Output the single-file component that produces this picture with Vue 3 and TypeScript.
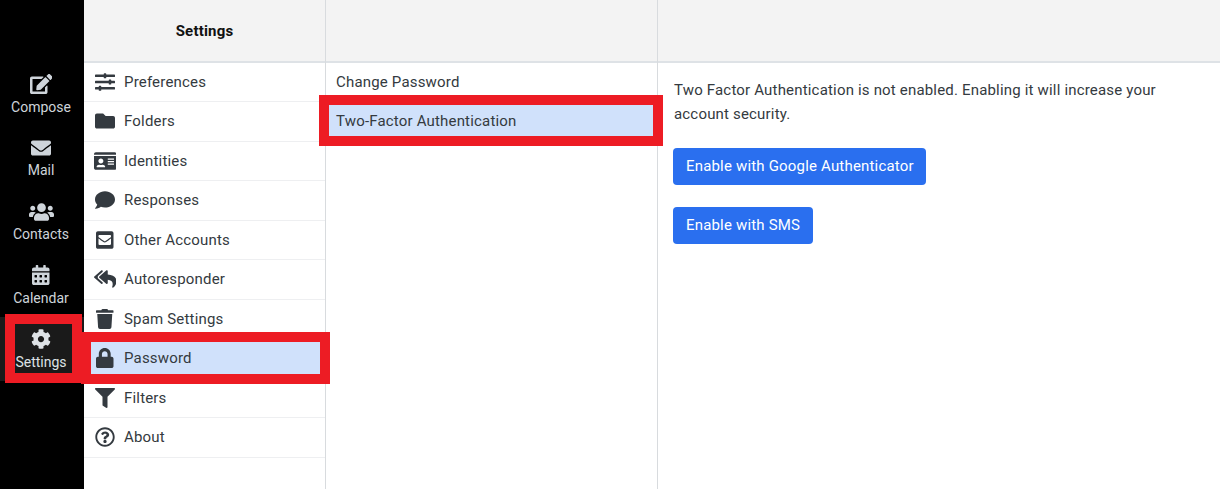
<script setup lang="ts">
interface Icon { vb: string; d: string }
const icons: Record<string, Icon> = {
  edit: { vb: '0 0 576 512', d: 'M402.6 83.2l90.2 90.2c3.8 3.8 3.8 10 0 13.8L274.4 405.6l-92.8 10.3c-12.4 1.4-22.9-9.1-21.5-21.5l10.3-92.8L388.8 83.2c3.8-3.8 10-3.8 13.8 0zm162-22.9l-48.8-48.8c-15.2-15.2-39.9-15.2-55.2 0l-35.4 35.4c-3.8 3.8-3.8 10 0 13.8l90.2 90.2c3.8 3.8 10 3.8 13.8 0l35.4-35.4c15.2-15.3 15.2-40 0-55.2zM384 346.2V448H64V128h229.8c3.2 0 6.2-1.3 8.5-3.5l40-40c7.6-7.6 2.2-20.5-8.5-20.5H48C21.5 64 0 85.5 0 112v352c0 26.5 21.5 48 48 48h352c26.5 0 48-21.5 48-48V306.2c0-10.7-12.9-16-20.5-8.5l-40 40c-2.2 2.3-3.5 5.3-3.5 8.5z' },
  envelope: { vb: '0 0 512 512', d: 'M502.3 190.8c3.9-3.1 9.7-.2 9.7 4.7V400c0 26.5-21.5 48-48 48H48c-26.5 0-48-21.5-48-48V195.6c0-5 5.7-7.8 9.7-4.7 22.4 17.4 52.1 39.5 154.1 113.6 21.1 15.4 56.7 47.8 92.2 47.6 35.7.3 72-32.8 92.3-47.6 102-74.1 131.6-96.3 154-113.7zM256 320c23.2.4 56.6-29.2 73.4-41.4 132.7-96.3 142.8-104.7 173.4-128.7 5.8-4.5 9.2-11.5 9.2-18.9v-19c0-26.5-21.5-48-48-48H48C21.5 64 0 85.5 0 112v19c0 7.4 3.4 14.3 9.2 18.9 30.6 23.9 40.7 32.4 173.4 128.7 16.8 12.2 50.2 41.8 73.4 41.4z' },
  users: { vb: '0 0 640 512', d: 'M96 224c35.3 0 64-28.7 64-64s-28.7-64-64-64-64 28.7-64 64 28.7 64 64 64zm448 0c35.3 0 64-28.7 64-64s-28.7-64-64-64-64 28.7-64 64 28.7 64 64 64zm32 32h-64c-17.6 0-33.5 7.1-45.1 18.6 40.3 22.1 68.9 62 75.1 109.4h66c17.7 0 32-14.3 32-32v-32c0-35.3-28.7-64-64-64zm-256 0c61.9 0 112-50.1 112-112S381.9 32 320 32 208 82.1 208 144s50.1 112 112 112zm76.8 32h-8.3c-20.8 10-43.9 16-68.5 16s-47.6-6-68.5-16h-8.3C179.6 288 128 339.6 128 403.2V432c0 26.5 21.5 48 48 48h288c26.5 0 48-21.5 48-48v-28.8c0-63.6-51.6-115.2-115.2-115.2zm-223.7-13.4C161.5 263.1 145.6 256 128 256H64c-35.3 0-64 28.7-64 64v32c0 17.7 14.3 32 32 32h65.9c6.3-47.4 34.9-87.3 75.2-109.4z' },
  calendar: { vb: '0 0 448 512', d: 'M0 464c0 26.5 21.5 48 48 48h352c26.5 0 48-21.5 48-48V192H0v272zm320-196c0-6.6 5.4-12 12-12h40c6.6 0 12 5.4 12 12v40c0 6.6-5.4 12-12 12h-40c-6.6 0-12-5.4-12-12v-40zm0 128c0-6.6 5.4-12 12-12h40c6.6 0 12 5.4 12 12v40c0 6.6-5.4 12-12 12h-40c-6.6 0-12-5.4-12-12v-40zM192 268c0-6.6 5.4-12 12-12h40c6.6 0 12 5.4 12 12v40c0 6.6-5.4 12-12 12h-40c-6.6 0-12-5.4-12-12v-40zm0 128c0-6.6 5.4-12 12-12h40c6.6 0 12 5.4 12 12v40c0 6.6-5.4 12-12 12h-40c-6.6 0-12-5.4-12-12v-40zM64 268c0-6.6 5.4-12 12-12h40c6.6 0 12 5.4 12 12v40c0 6.6-5.4 12-12 12H76c-6.6 0-12-5.4-12-12v-40zm0 128c0-6.6 5.4-12 12-12h40c6.6 0 12 5.4 12 12v40c0 6.6-5.4 12-12 12H76c-6.6 0-12-5.4-12-12v-40zM400 64h-48V16c0-8.8-7.2-16-16-16h-32c-8.8 0-16 7.2-16 16v48H160V16c0-8.8-7.2-16-16-16h-32c-8.8 0-16 7.2-16 16v48H48C21.5 64 0 85.5 0 112v48h448v-48c0-26.5-21.5-48-48-48z' },
  cog: { vb: '0 0 512 512', d: 'M487.4 315.7l-42.6-24.6c4.3-23.2 4.3-47 0-70.2l42.6-24.6c4.9-2.8 7.1-8.6 5.5-14-11.1-35.6-30-67.8-54.7-94.6-3.8-4.1-10-5.1-14.8-2.3L380.8 110c-17.9-15.4-38.5-27.3-60.8-35.1V25.8c0-5.6-3.9-10.5-9.4-11.7-36.7-8.2-74.3-7.8-109.2 0-5.5 1.2-9.4 6.1-9.4 11.7V75c-22.2 7.9-42.8 19.8-60.8 35.1L88.7 85.5c-4.9-2.8-11-1.9-14.8 2.3-24.7 26.7-43.6 58.9-54.7 94.6-1.7 5.4.6 11.2 5.5 14L67.3 221c-4.3 23.2-4.3 47 0 70.2l-42.6 24.6c-4.9 2.8-7.1 8.6-5.5 14 11.1 35.6 30 67.8 54.7 94.6 3.8 4.1 10 5.1 14.8 2.3l42.6-24.6c17.9 15.4 38.5 27.3 60.8 35.1v49.2c0 5.6 3.9 10.5 9.4 11.7 36.7 8.2 74.3 7.8 109.2 0 5.5-1.2 9.4-6.1 9.4-11.7v-49.2c22.2-7.9 42.8-19.8 60.8-35.1l42.6 24.6c4.9 2.8 11 1.9 14.8-2.3 24.7-26.7 43.6-58.9 54.7-94.6 1.5-5.5-.7-11.3-5.6-14.1zM256 336c-44.1 0-80-35.9-80-80s35.9-80 80-80 80 35.9 80 80-35.9 80-80 80z' },
  sliders: { vb: '0 0 512 512', d: 'M496 384H160v-16c0-8.8-7.2-16-16-16h-32c-8.8 0-16 7.2-16 16v16H16c-8.8 0-16 7.2-16 16v32c0 8.8 7.2 16 16 16h80v16c0 8.8 7.2 16 16 16h32c8.8 0 16-7.2 16-16v-16h336c8.8 0 16-7.2 16-16v-32c0-8.8-7.2-16-16-16zm0-160h-80v-16c0-8.8-7.2-16-16-16h-32c-8.8 0-16 7.2-16 16v16H16c-8.8 0-16 7.2-16 16v32c0 8.8 7.2 16 16 16h336v16c0 8.8 7.2 16 16 16h32c8.8 0 16-7.2 16-16v-16h80c8.8 0 16-7.2 16-16v-32c0-8.8-7.2-16-16-16zm0-160H288V48c0-8.8-7.2-16-16-16h-32c-8.8 0-16 7.2-16 16v16H16C7.2 64 0 71.2 0 80v32c0 8.8 7.2 16 16 16h208v16c0 8.8 7.2 16 16 16h32c8.8 0 16-7.2 16-16v-16h208c8.8 0 16-7.2 16-16V80c0-8.8-7.2-16-16-16z' },
  folder: { vb: '0 0 512 512', d: 'M464 128H272l-64-64H48C21.49 64 0 85.49 0 112v288c0 26.51 21.49 48 48 48h416c26.51 0 48-21.49 48-48V176c0-26.51-21.49-48-48-48z' },
  idcard: { vb: '0 0 576 512', d: 'M528 32H48C21.5 32 0 53.5 0 80v16h576V80c0-26.5-21.5-48-48-48zM0 432c0 26.5 21.5 48 48 48h480c26.5 0 48-21.5 48-48V128H0v304zm352-232c0-4.4 3.6-8 8-8h144c4.4 0 8 3.6 8 8v16c0 4.4-3.6 8-8 8H360c-4.4 0-8-3.6-8-8v-16zm0 64c0-4.4 3.6-8 8-8h144c4.4 0 8 3.6 8 8v16c0 4.4-3.6 8-8 8H360c-4.4 0-8-3.6-8-8v-16zm0 64c0-4.4 3.6-8 8-8h144c4.4 0 8 3.6 8 8v16c0 4.4-3.6 8-8 8H360c-4.4 0-8-3.6-8-8v-16zM176 192c35.3 0 64 28.7 64 64s-28.7 64-64 64-64-28.7-64-64 28.7-64 64-64zM67.1 396.2C75.5 370.5 99.6 352 128 352h8.2c12.3 5.1 25.7 8 39.8 8s27.6-2.9 39.8-8h8.2c28.4 0 52.5 18.5 60.9 44.2 3.2 9.9-5.2 19.8-15.6 19.8H82.7c-10.4 0-18.8-10-15.6-19.8z' },
  comment: { vb: '0 0 512 512', d: 'M256 32C114.6 32 0 125.1 0 240c0 49.6 21.4 95 57 130.7C44.5 421.1 2.7 466 2.2 466.5c-2.2 2.3-2.8 5.7-1.5 8.7S4.8 480 8 480c66.3 0 116-31.8 140.6-51.4 32.7 12.3 69 19.4 107.4 19.4 141.4 0 256-93.1 256-208S397.4 32 256 32z' },
  envsq: { vb: '0 0 448 512', d: 'M400 32H48C21.49 32 0 53.49 0 80v352c0 26.51 21.49 48 48 48h352c26.51 0 48-21.49 48-48V80c0-26.51-21.49-48-48-48zM178.117 262.104C87.429 196.287 88.353 196.121 64 177.167V152c0-13.255 10.745-24 24-24h272c13.255 0 24 10.745 24 24v25.167c-24.371 18.969-23.434 19.124-114.117 84.938-10.5 7.655-31.392 26.12-45.883 25.894-14.503.218-35.367-18.227-45.883-25.895zM384 217.775V360c0 13.255-10.745 24-24 24H88c-13.255 0-24-10.745-24-24V217.775c13.958 10.794 33.329 25.236 95.303 70.214 14.162 10.341 37.975 32.145 64.694 32.01 26.887.134 51.037-22.041 64.72-32.025 61.958-44.965 81.325-59.406 95.283-70.199z' },
  replyall: { vb: '0 0 576 512', d: 'M136.309 189.836L312.313 37.851C327.72 24.546 352 35.348 352 56.015v82.763c129.182 10.231 224 52.212 224 183.548 0 61.441-39.582 122.309-83.333 154.132-13.653 9.931-33.111-2.533-28.077-18.631 38.512-123.162-3.922-169.482-112.59-182.015v84.175c0 20.701-24.3 31.453-39.687 18.164L136.309 226.164c-11.071-9.561-11.086-26.753 0-36.328zm-128 36.328L184.313 378.15C199.7 391.439 224 380.687 224 359.986v-15.818l-108.606-93.785A55.96 55.96 0 0 1 96 207.998a55.953 55.953 0 0 1 19.393-42.38L224 71.832V56.015c0-20.667-24.28-31.469-39.687-18.164L8.309 189.836c-11.086 9.575-11.071 26.767 0 36.328z' },
  trash: { vb: '0 0 448 512', d: 'M432 32H312l-9.4-18.7A24 24 0 0 0 281.1 0H166.8a23.72 23.72 0 0 0-21.4 13.3L136 32H16A16 16 0 0 0 0 48v32a16 16 0 0 0 16 16h416a16 16 0 0 0 16-16V48a16 16 0 0 0-16-16zM53.2 467a48 48 0 0 0 47.9 45h245.8a48 48 0 0 0 47.9-45L416 128H32z' },
  lock: { vb: '0 0 448 512', d: 'M400 224h-24v-72C376 68.2 307.8 0 224 0S72 68.2 72 152v72H48c-26.5 0-48 21.5-48 48v192c0 26.5 21.5 48 48 48h352c26.5 0 48-21.5 48-48V272c0-26.5-21.5-48-48-48zm-104 0H152v-72c0-39.7 32.3-72 72-72s72 32.3 72 72v72z' },
  filter: { vb: '0 0 512 512', d: 'M487.976 0H24.028C2.71 0-8.047 25.866 7.058 40.971L192 225.941V432c0 7.831 3.821 15.17 10.237 19.662l80 55.98C298.02 518.69 320 507.493 320 487.98V225.941l184.947-184.97C520.021 25.896 509.338 0 487.976 0z' },
  question: { vb: '0 0 512 512', d: 'M256 8C119.043 8 8 119.083 8 256c0 136.997 111.043 248 248 248s248-111.003 248-248C504 119.083 392.957 8 256 8zm0 448c-110.532 0-200-89.431-200-200 0-110.495 89.472-200 200-200 110.491 0 200 89.471 200 200 0 110.53-89.431 200-200 200zm107.244-255.2c0 67.052-72.421 68.084-72.421 92.863V300c0 6.627-5.373 12-12 12h-45.647c-6.627 0-12-5.373-12-12v-8.659c0-35.745 27.1-50.034 47.579-61.516 17.561-9.845 28.324-16.541 28.324-29.579 0-17.246-21.999-28.693-39.784-28.693-23.189 0-33.894 10.977-48.942 29.969-4.057 5.12-11.46 6.071-16.666 2.124l-27.824-21.098c-5.107-3.872-6.251-11.066-2.644-16.363C184.846 131.491 214.94 112 261.794 112c49.071 0 101.45 38.304 101.45 88.8zM298 368c0 23.159-18.841 42-42 42s-42-18.841-42-42 18.841-42 42-42 42 18.841 42 42z' },
}
const nav = [
  { label: 'Compose', icon: 'edit' },
  { label: 'Mail', icon: 'envelope' },
  { label: 'Contacts', icon: 'users' },
  { label: 'Calendar', icon: 'calendar' },
  { label: 'Settings', icon: 'cog', active: true },
]
const menu = [
  { label: 'Preferences', icon: 'sliders' },
  { label: 'Folders', icon: 'folder' },
  { label: 'Identities', icon: 'idcard' },
  { label: 'Responses', icon: 'comment' },
  { label: 'Other Accounts', icon: 'envsq' },
  { label: 'Autoresponder', icon: 'replyall' },
  { label: 'Spam Settings', icon: 'trash' },
  { label: 'Password', icon: 'lock', active: true },
  { label: 'Filters', icon: 'filter' },
  { label: 'About', icon: 'question' },
]
</script>

<template>
  <div class="app">
    <nav class="rail">
      <a v-for="n in nav" :key="n.label" class="rail-item" :class="{ active: n.active }">
        <svg class="rail-icon" :viewBox="icons[n.icon].vb" fill="currentColor"><path :d="icons[n.icon].d" /></svg>
        <span>{{ n.label }}</span>
      </a>
    </nav>
    <section class="col col-menu">
      <header class="head"><strong>Settings</strong></header>
      <a v-for="m in menu" :key="m.label" class="row" :class="{ active: m.active }">
        <span class="row-icon"><svg :viewBox="icons[m.icon].vb" fill="currentColor"><path :d="icons[m.icon].d" /></svg></span>
        {{ m.label }}
      </a>
    </section>
    <section class="col col-sub">
      <header class="head"></header>
      <a class="row plain">Change Password</a>
      <a class="row plain active">Two-Factor Authentication</a>
    </section>
    <main class="content">
      <header class="head"></header>
      <div class="body">
        <p>Two Factor Authentication is not enabled. Enabling it will increase your account security.</p>
        <button class="btn">Enable with Google Authenticator</button>
        <button class="btn">Enable with SMS</button>
      </div>
    </main>
    <div class="mark mark-settings"></div>
    <div class="mark mark-password"></div>
    <div class="mark mark-two"></div>
  </div>
</template>

<style>
html, body { margin: 0; background: #fff; }
</style>

<style scoped>
.app {
  position: relative;
  display: flex;
  width: 1220px;
  height: 489px;
  overflow: hidden;
  font-family: Roboto, "Liberation Sans", sans-serif;
  font-size: 15px;
  letter-spacing: 0.18px;
  color: #343a40;
  background: #fff;
}
.rail {
  width: 84px;
  flex: none;
  background: #000;
  padding-top: 62px;
  box-sizing: border-box;
}
.rail-item {
  height: 63.75px;
  display: flex;
  flex-direction: column;
  align-items: center;
  padding: 12px 2px 0 0;
  box-sizing: border-box;
  color: #ced4da;
  font-size: 14px;
  letter-spacing: 0;
  line-height: 20px;
}
.rail-item.active { background: #1a1a1a; color: #dee2e6; }
.rail-icon { height: 20px; width: auto; margin-bottom: 2.7px; }
.col { flex: none; box-sizing: border-box; border-right: 1px solid #d8dbde; }
.col-menu { width: 242px; }
.col-sub { width: 332px; }
.content { flex: 1; }
.head {
  height: 62.5px;
  box-sizing: border-box;
  background: #f3f3f3;
  border-bottom: 2px solid #dee2e6;
  display: flex;
  align-items: center;
  justify-content: center;
  padding-top: 1px;
  color: #111;
}
.head strong { font-weight: 700; }
.row {
  display: flex;
  align-items: center;
  height: 39.5px;
  box-sizing: border-box;
  border-bottom: 1px solid #eeeff1;
  padding-left: 11px;
  gap: 9px;
}
.row.active { background: #d0e1fb; }
.row.plain { border-bottom-color: transparent; padding-left: 10px; }
.row-icon { width: 20px; height: 20px; display: flex; justify-content: center; }
.row-icon svg { height: 20px; width: auto; flex: none; }
.body { padding: 15px 16px; }
.body p { margin: 0 0 21.5px; width: 520px; line-height: 24.5px; }
.btn {
  display: block;
  height: 36.5px;
  padding: 0 12.5px 0 13px;
  margin: 0 0 22.5px -1px;
  border: 0;
  border-radius: 4px;
  background: #2a6fef;
  color: #fff;
  font: inherit;
  letter-spacing: inherit;
}
.mark { position: absolute; box-sizing: border-box; border: 10px solid #ed1c24; pointer-events: none; }
.mark-settings { left: 5px; top: 314px; width: 77px; height: 69px; }
.mark-password { left: 81px; top: 332px; width: 249px; height: 52px; }
.mark-two { left: 319px; top: 95px; width: 344px; height: 51px; }
</style>
